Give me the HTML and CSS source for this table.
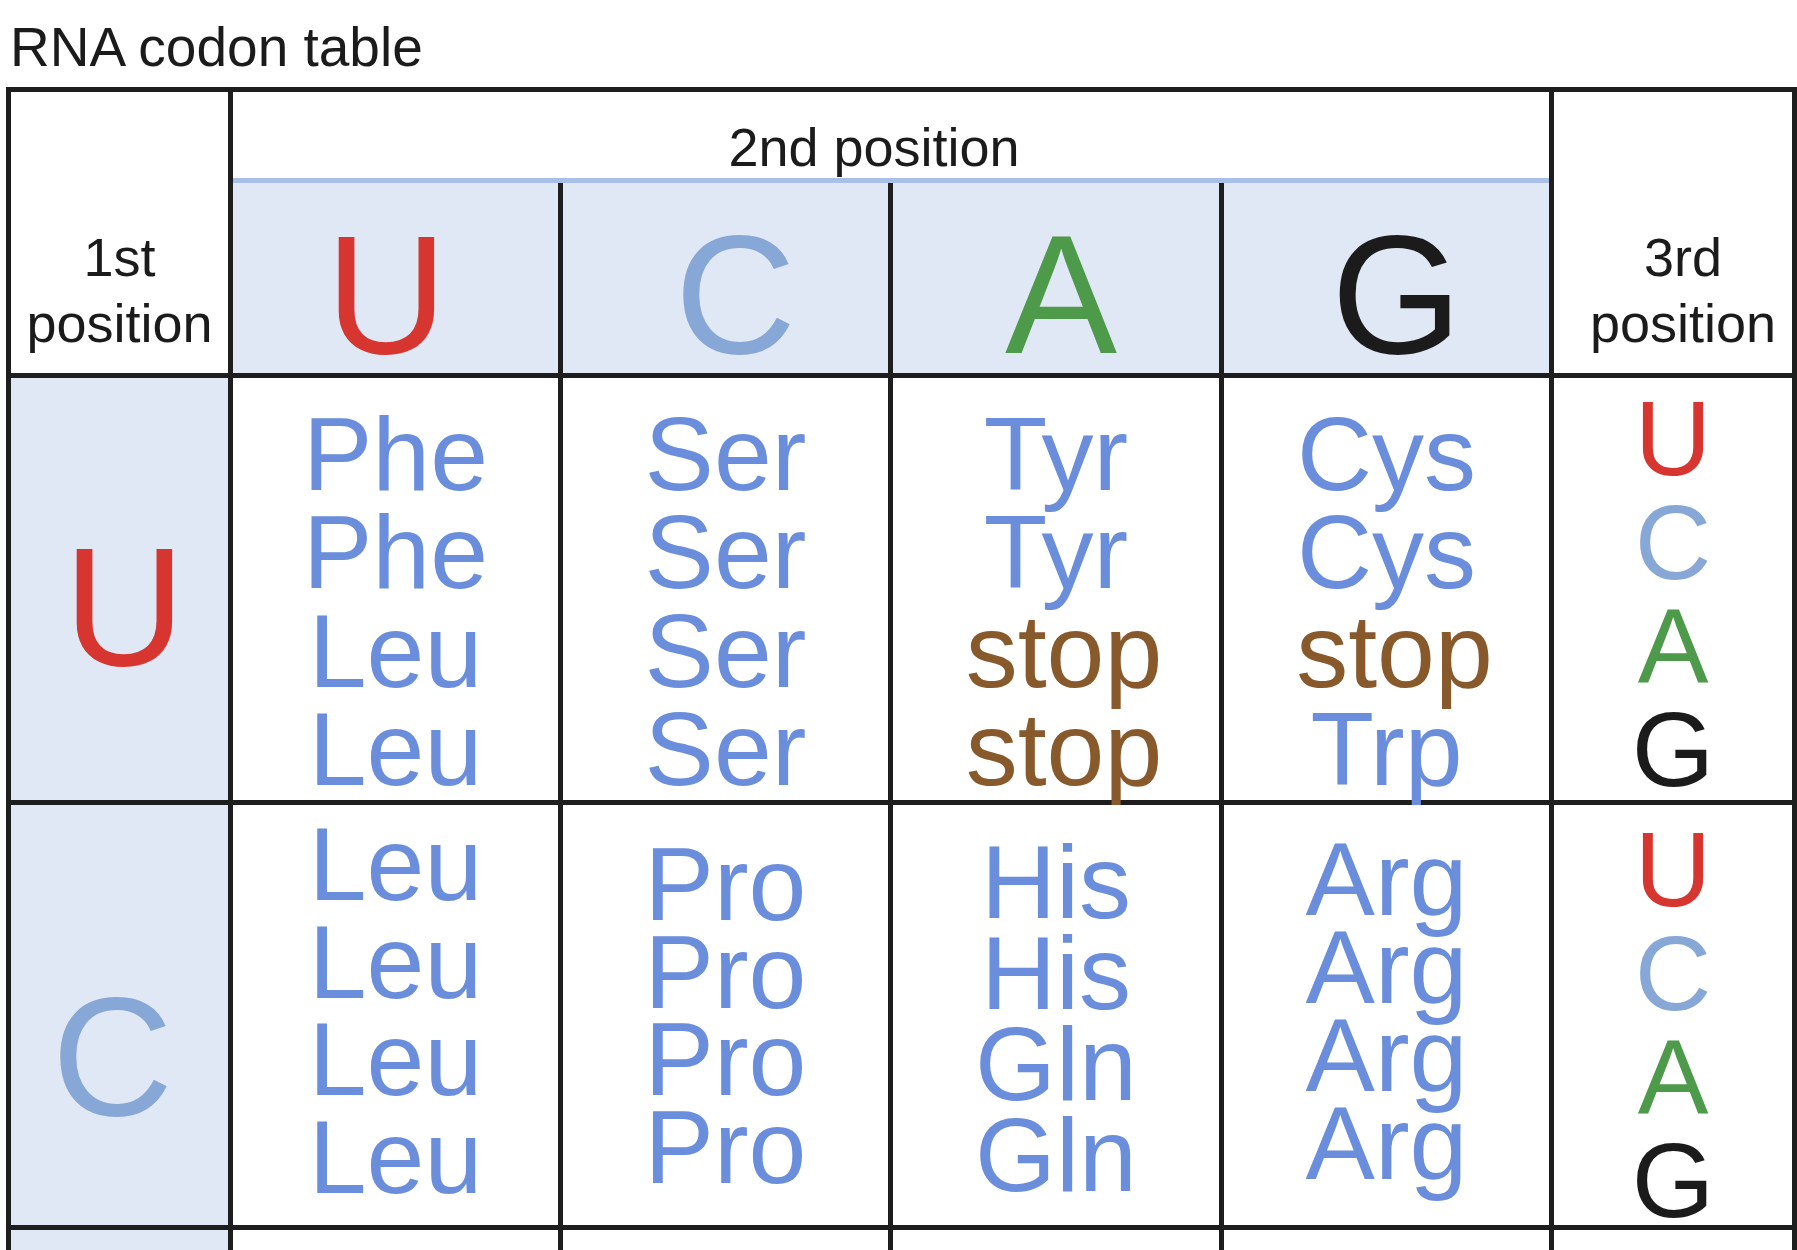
FILE: index.html
```html
<!DOCTYPE html>
<html lang="en">
<head>
<meta charset="utf-8">
<title>RNA codon table</title>
<link rel="stylesheet" href="styles.css">
</head>
<body>
<h1 class="title">RNA codon table</h1>
<div class="codon-table">
  <div class="pos-label">1st<br>position</div>
  <div class="second-pos">
    <div class="second-label">2nd position</div>
    <div class="base-heads">
      <div class="base-head head-u b-u">U</div>
      <div class="base-head head-c b-c">C</div>
      <div class="base-head head-a b-a">A</div>
      <div class="base-head head-g b-g">G</div>
    </div>
  </div>
  <div class="pos-label pos-label--third">3rd<br>position</div>

  <div class="first-base row-u b-u">U</div>
  <div class="aa"><div>Phe</div><div>Phe</div><div>Leu</div><div>Leu</div></div>
  <div class="aa"><div>Ser</div><div>Ser</div><div>Ser</div><div>Ser</div></div>
  <div class="aa"><div>Tyr</div><div>Tyr</div><div class="stop">stop</div><div class="stop">stop</div></div>
  <div class="aa"><div>Cys</div><div>Cys</div><div class="stop">stop</div><div>Trp</div></div>
  <div class="third"><div class="b-u">U</div><div class="b-c">C</div><div class="b-a">A</div><div class="b-g">G</div></div>

  <div class="first-base row-c b-c">C</div>
  <div class="aa aa--leu"><div>Leu</div><div>Leu</div><div>Leu</div><div>Leu</div></div>
  <div class="aa aa--pro"><div>Pro</div><div>Pro</div><div>Pro</div><div>Pro</div></div>
  <div class="aa aa--his"><div>His</div><div>His</div><div>Gln</div><div>Gln</div></div>
  <div class="aa aa--arg"><div>Arg</div><div>Arg</div><div>Arg</div><div>Arg</div></div>
  <div class="third third--c"><div class="b-u">U</div><div class="b-c">C</div><div class="b-a">A</div><div class="b-g">G</div></div>

  <div class="first-base row-a b-a">A</div>
  <div class="aa aa--low"><div>Ile</div><div>Ile</div><div>Ile</div><div>Met</div></div>
  <div class="aa aa--low"><div>Thr</div><div>Thr</div><div>Thr</div><div>Thr</div></div>
  <div class="aa aa--low"><div>Asn</div><div>Asn</div><div>Lys</div><div>Lys</div></div>
  <div class="aa aa--low"><div>Ser</div><div>Ser</div><div>Arg</div><div>Arg</div></div>
  <div class="third third--low"><div class="b-u">U</div><div class="b-c">C</div><div class="b-a">A</div><div class="b-g">G</div></div>

  <div class="first-base row-g b-g">G</div>
  <div class="aa aa--low"><div>Val</div><div>Val</div><div>Val</div><div>Val</div></div>
  <div class="aa aa--low"><div>Ala</div><div>Ala</div><div>Ala</div><div>Ala</div></div>
  <div class="aa aa--low"><div>Asp</div><div>Asp</div><div>Glu</div><div>Glu</div></div>
  <div class="aa aa--low"><div>Gly</div><div>Gly</div><div>Gly</div><div>Gly</div></div>
  <div class="third third--low"><div class="b-u">U</div><div class="b-c">C</div><div class="b-a">A</div><div class="b-g">G</div></div>
</div>
</body>
</html>
```
FILE: styles.css
```css
html, body {
  margin: 0;
  padding: 0;
  background: #ffffff;
  overflow: hidden;
}

body {
  font-family: "Liberation Sans", Arial, Helvetica, sans-serif;
  color: #1b1b1b;
}

.title {
  margin: 0 0 9px 0;
  padding: 16px 0 0 10px;
  font-size: 55px;
  font-weight: normal;
  line-height: 62px;
}

.codon-table {
  margin-left: 6px;
  width: 1791px;
  box-sizing: border-box;
  display: grid;
  grid-template-columns: 217px 325px 325px 326px 325px 1fr;
  grid-template-rows: 281px 422px 420px 420px 420px;
  gap: 5px;
  padding: 5px;
  background: #1e1e1e;
}

/* header */
.pos-label {
  background: #ffffff;
  font-size: 54px;
  line-height: 66px;
  text-align: center;
  display: flex;
  flex-direction: column;
  justify-content: flex-end;
  padding-bottom: 17px;
}

.pos-label--third {
  padding-left: 20px;
}

.second-pos {
  grid-column: 2 / 6;
  display: flex;
  flex-direction: column;
  background: #ffffff;
}

.second-label {
  height: 91px;
  box-sizing: border-box;
  padding: 24px 34px 0 0;
  font-size: 54px;
  line-height: 62px;
  text-align: center;
  border-bottom: 5px solid #a8bfe8;
}

.base-heads {
  flex: 1;
  display: grid;
  grid-template-columns: 325px 325px 326px 325px;
  grid-template-rows: 190px;
  gap: 5px;
  background: #1e1e1e;
}

.base-head {
  background: #e1e8f5;
  font-size: 168px;
  line-height: 168px;
  padding-top: 28px;
  text-align: center;
}

.head-u { padding-right: 18px; }
.head-c { padding-left: 20px; }
.head-a { padding-left: 10px; }
.head-g { padding-left: 20px; }

/* base colours */
.b-u { color: #d7352f; }
.b-c { color: #87a7d6; }
.b-a { color: #4e9a4b; }
.b-g { color: #1b1b1b; }

/* first position column */
.first-base {
  background: #e1e8f5;
  font-size: 168px;
  line-height: 168px;
  text-align: center;
  padding-top: 145px;
}

.first-base.row-u { padding-left: 10px; }
.first-base.row-c { padding-top: 168px; padding-right: 14px; }

/* amino acid cells */
.aa {
  background: #ffffff;
  color: #6a8edb;
  font-size: 104px;
  line-height: 98.3px;
  text-align: center;
  padding-top: 27px;
}

.aa--leu { line-height: 97.7px; padding-top: 11px; }
.aa--pro { line-height: 87.5px; padding-top: 36px; }
.aa--his { line-height: 91px; padding-top: 32px; }
.aa--arg { line-height: 88px; padding-top: 30px; }
.aa--low { padding-top: 40px; }

.stop {
  color: #87592b;
  padding-left: 16px;
}

/* third position column */
.third {
  background: #ffffff;
  font-size: 106px;
  line-height: 103.5px;
  text-align: center;
  padding-top: 9px;
}

.third--c { padding-top: 13px; }
.third--low { padding-top: 30px; }
```
